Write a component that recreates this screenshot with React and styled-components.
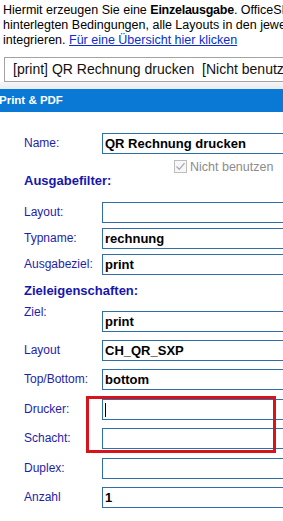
import React from "react";
import styled, { createGlobalStyle } from "styled-components";

const GlobalStyle = createGlobalStyle`
  body {
    margin: 0;
    background: #fff;
    font-family: "Liberation Sans", Arial, sans-serif;
    overflow: hidden;
  }
`;

const Page = styled.div`
  width: 283px;
  height: 521px;
  overflow: hidden;
  background: #fff;
`;

const Intro = styled.div`
  padding: 3px 0 0 3px;
  font-size: 12.5px;
  line-height: 15px;
  color: #000;
  white-space: nowrap;
  b {
    letter-spacing: -0.25px;
  }
  a {
    color: #0a2ecc;
    text-decoration: underline;
  }
`;

const Summary = styled.div`
  margin: 9px 0 0 4px;
  width: 320px;
  height: 25px;
  box-sizing: border-box;
  border: 1px solid #a3a3a3;
  padding-left: 8px;
  font-size: 14px;
  line-height: 23px;
  color: #111;
  white-space: pre;
`;

const Strip = styled.div`
  height: 7px;
  background: linear-gradient(#f6f6f6, #e9ecef);
`;

const Header = styled.div`
  height: 23px;
  background: #0a78d5;
  color: #fff;
  font-weight: bold;
  font-size: 11.5px;
  line-height: 23px;
  text-indent: -1px;
`;

const Form = styled.div`
  padding-top: 21px;
  display: flex;
  flex-direction: column;
`;

const Group = styled.div`
  display: flex;
  flex-direction: column;
  gap: ${(p) => p.$gap}px;
  margin-top: ${(p) => p.$mt || 0}px;
  position: relative;
  padding: ${(p) => (p.$pad ? "1px 0" : "0")};
`;

const Row = styled.div`
  display: flex;
  align-items: ${(p) => (p.$top ? "flex-start" : "center")};
  padding-left: 24px;
  min-height: 21px;
`;

const Label = styled.div`
  width: 78px;
  flex: none;
  font-size: 12px;
  line-height: 15px;
  color: #1e1ea8;
`;

const Field = styled.div`
  width: 200px;
  height: 21px;
  flex: none;
  box-sizing: border-box;
  border: 1px solid #2f6fa8;
  background: #fff;
  padding: 0 2px;
  display: flex;
  align-items: center;
  font-weight: bold;
  font-size: 13px;
  color: #000;
  margin-top: ${(p) => (p.$drop ? "6px" : "0")};
`;

const Caret = styled.span`
  display: block;
  width: 1px;
  height: 14px;
  background: #000;
`;

const CheckRow = styled.div`
  margin-top: 6px;
  padding-left: 174px;
  height: 13px;
  display: flex;
  align-items: center;
  gap: 3px;
`;

const CheckBox = styled.span`
  width: 13px;
  height: 13px;
  box-sizing: border-box;
  border: 1px solid #bcbcbc;
  background: #f7f7f7;
  display: flex;
  align-items: center;
  justify-content: center;
`;

const CheckText = styled.span`
  font-size: 12.5px;
  color: #8c8c8c;
  white-space: nowrap;
`;

const Heading = styled.div`
  padding-left: 24px;
  margin-top: ${(p) => p.$mt}px;
  font-weight: bold;
  font-size: 13px;
  line-height: 16px;
  color: #1616ac;
`;

const Highlight = styled.div`
  position: absolute;
  left: 86px;
  top: -2px;
  width: 190px;
  height: 57px;
  box-sizing: border-box;
  border: 3px solid #d7141a;
  pointer-events: none;
`;

const Input = ({ label, value, top, caret }) => (
  <Row $top={top}>
    <Label>{label}</Label>
    <Field $drop={top}>
      {caret ? <Caret /> : value}
    </Field>
  </Row>
);

export default function App() {
  return (
    <Page>
      <GlobalStyle />
      <Intro>
        Hiermit erzeugen Sie eine <b>Einzelausgabe</b>. OfficeSI
        <br />
        hinterlegten Bedingungen, alle Layouts in den jeweiligen
        <br />
        integrieren. <a href="#">Für eine Übersicht hier klicken</a>
      </Intro>
      <Summary>{"[print] QR Rechnung drucken  [Nicht benutzen]"}</Summary>
      <Strip />
      <Header>Print &amp; PDF</Header>
      <Form>
        <Input label="Name:" value="QR Rechnung drucken" />
        <CheckRow>
          <CheckBox>
            <svg width="11" height="11" viewBox="0 0 11 11">
              <path d="M1.5 5.5 L4.3 8.3 L9.5 2.2" fill="none" stroke="#a9a9a9" strokeWidth="1.3" />
            </svg>
          </CheckBox>
          <CheckText>Nicht benutzen</CheckText>
        </CheckRow>
        <Heading $mt={0}>Ausgabefilter:</Heading>
        <Group $gap={5} $mt={13}>
          <Input label="Layout:" value="" />
          <Input label="Typname:" value="rechnung" />
          <Input label="Ausgabeziel:" value="print" />
        </Group>
        <Heading $mt={8}>Zieleigenschaften:</Heading>
        <Group $gap={8} $mt={6}>
          <Input label="Ziel:" value="print" top />
          <Input label="Layout" value="CH_QR_SXP" />
          <Input label="Top/Bottom:" value="bottom" />
          <Group $gap={8} $pad>
            <Input label="Drucker:" caret />
            <Input label="Schacht:" value="" />
            <Highlight />
          </Group>
          <Input label="Duplex:" value="" />
          <Input label="Anzahl" value="1" />
        </Group>
      </Form>
    </Page>
  );
}
